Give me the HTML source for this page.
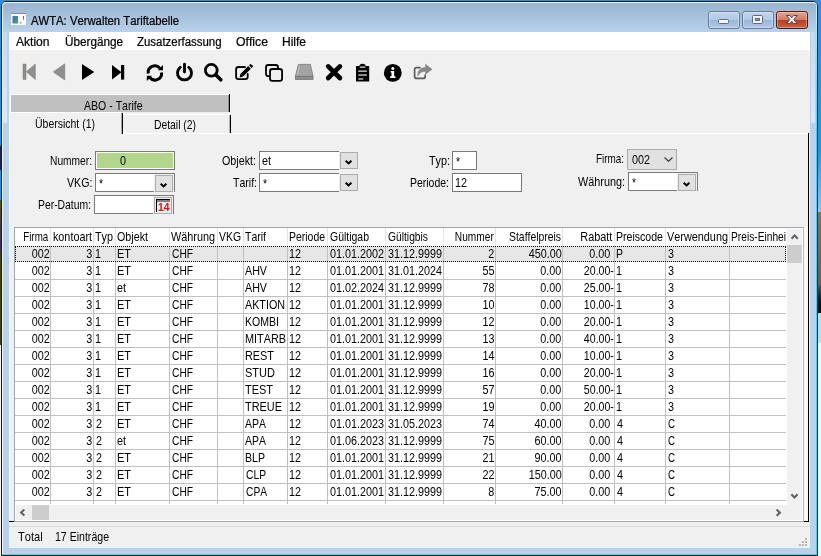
<!DOCTYPE html>
<html><head><meta charset="utf-8"><title>AWTA: Verwalten Tariftabelle</title>
<style>
html,body{margin:0;padding:0}
body{width:821px;height:556px;position:relative;overflow:hidden;background:#2f8ee0;font-family:"Liberation Sans",sans-serif;color:#000;font-kerning:none;font-variant-ligatures:none}
div,span,svg{position:absolute;box-sizing:border-box}
.m{font-size:13px;line-height:13px;white-space:nowrap;transform-origin:0 0;display:block}
.u{-webkit-text-stroke:.22px #000;font-size:12px;line-height:12px;white-space:nowrap;transform-origin:0 0;display:block}
#w{left:0;top:0;width:821px;height:556px;will-change:transform}
</style></head><body><div id="w">
<div style="left:818px;top:150px;width:3px;height:62px;background:linear-gradient(#2f8ee0,#a9b9e2);"></div>
<div style="left:818px;top:212px;width:3px;height:74px;background:linear-gradient(#8f6e56,#76594a);"></div>
<div style="left:818px;top:286px;width:3px;height:27px;background:linear-gradient(#5a4a42,#0c0c0c 60%);"></div>
<div style="left:818px;top:313px;width:3px;height:30px;background:#d2d4d8;"></div>
<div style="left:818px;top:343px;width:3px;height:213px;background:#fcfcfc;"></div>
<div style="left:0px;top:146px;width:1px;height:24px;background:#1c2450;"></div>
<div style="left:0px;top:200px;width:1px;height:145px;background:linear-gradient(#4f5a18,#3a3060 30%,#44480f 45%,#3e4210);"></div>
<div style="left:0px;top:345px;width:1px;height:211px;background:#f4f4f4;"></div>
<div style="left:1px;top:1px;width:817px;height:555px;background:#b9d1ea;border:1px solid #1b1b1b;border-radius:5px 5px 0 0;"></div>
<div style="left:2px;top:2px;width:815px;height:30px;background:linear-gradient(#99b4d1,#b9d1ea);border-top:1px solid #f2f6fb;border-left:1px solid #e6eef8;border-radius:4px 4px 0 0;"></div>
<div style="left:2px;top:8px;width:1px;height:546px;background:#eef3fa;"></div>
<div style="left:816px;top:5px;width:1px;height:550px;background:linear-gradient(#c4effb 0,#7fe2f8 60px,#38d6f6 130px);"></div>
<div style="left:2px;top:554px;width:815px;height:1px;background:#38d6f6;"></div>
<div style="left:811px;top:32px;width:4px;height:91px;background:linear-gradient(#c6d9ef,#dde8f5);"></div>
<div style="left:3px;top:32px;width:4px;height:91px;background:linear-gradient(#c6d9ef,#dde8f5);"></div>
<svg style="left:11px;top:13px" width="15" height="13" viewBox="0 0 15 13"><defs><linearGradient id="gi" x1="0" y1="0" x2="1" y2="1"><stop offset="0" stop-color="#3f6fb5"/><stop offset="1" stop-color="#3fa870"/></linearGradient></defs><rect x="0" y="0" width="15" height="13" fill="#fafafa"/><rect x="0" y="0" width="15" height="1" fill="#8a8a8a"/><rect x="0" y="12" width="15" height="1" fill="#c8c8c8"/><rect x="1.5" y="3" width="5.5" height="7.5" fill="url(#gi)"/><rect x="8.5" y="9" width="2.5" height="1.5" fill="#b8b8b8"/><rect x="12" y="3" width="1" height="2" fill="#3a62b0"/><rect x="12" y="5" width="1" height="2" fill="#4cae50"/></svg>
<span class="u" style="left:30.5px;top:15.1px;transform:scaleX(.941)">AWTA: Verwalten Tariftabelle</span>
<div style="left:708px;top:11px;width:32px;height:18px;background:linear-gradient(#c2d5ec 0%,#b1c9e5 48%,#9bb7d9 52%,#afc8e5 100%);border:1px solid #65799a;border-radius:3px;box-shadow:inset 0 0 0 1px rgba(255,255,255,.35);"></div>
<div style="left:742px;top:11px;width:32px;height:18px;background:linear-gradient(#c2d5ec 0%,#b1c9e5 48%,#9bb7d9 52%,#afc8e5 100%);border:1px solid #65799a;border-radius:3px;box-shadow:inset 0 0 0 1px rgba(255,255,255,.35);"></div>
<div style="left:776px;top:11px;width:32px;height:18px;background:linear-gradient(#e0a294 0%,#d17c68 48%,#bb3e21 52%,#cb6240 100%);border:1px solid #521a15;border-radius:3px;box-shadow:inset 0 0 0 1px rgba(255,255,255,.35);"></div>
<svg style="left:708px;top:11px" width="100" height="18" viewBox="0 0 100 18"><rect x="10.5" y="8.5" width="10" height="4" rx="1" fill="#f4f4f4" stroke="#5e6c80"/><rect x="44.5" y="4.5" width="10" height="8" rx="1" fill="#f4f4f4" stroke="#5e6c80"/><rect x="47.5" y="7.5" width="4" height="2" fill="#8aa0c0" stroke="#5e6c80"/><path d="M78.50 4.50 L81.90 4.50 L83.80 6.80 L85.70 4.50 L89.10 4.50 L85.70 8.55 L89.10 12.60 L85.70 12.60 L83.80 10.30 L81.90 12.60 L78.50 12.60 L81.90 8.55 Z" fill="#f6f6f6" stroke="#54333a" stroke-width=".9" stroke-linejoin="round"/></svg>
<div style="left:9px;top:32px;width:801px;height:516px;background:#f0f0f0;"></div>
<div style="left:9px;top:32px;width:801px;height:18px;background:#ffffff;"></div>
<span class="u" style="left:16.0px;top:35.8px;transform:scaleX(1.0045)">Aktion</span>
<span class="u" style="left:64.5px;top:35.8px;transform:scaleX(0.9768)">Übergänge</span>
<span class="u" style="left:136.5px;top:35.8px;transform:scaleX(0.9525)">Zusatzerfassung</span>
<span class="u" style="left:235.5px;top:35.8px;transform:scaleX(1.0210)">Office</span>
<span class="u" style="left:282.0px;top:35.8px;transform:scaleX(0.9998)">Hilfe</span>
<div style="left:11px;top:94px;width:219px;height:1px;background:#ffffff;"></div>
<div style="left:10px;top:95px;width:1px;height:17px;background:#ffffff;"></div>
<div style="left:11px;top:95px;width:218px;height:17px;background:#c0c0c0;"></div>
<div style="left:229px;top:94px;width:1px;height:18px;background:#000;"></div>
<div style="left:228px;top:95px;width:1px;height:17px;background:rgba(0,0,0,.25);"></div>
<span class="m" style="top:99.00px;transform:scaleX(0.8112);left:84.2px;">ABO - Tarife</span>
<div style="left:9px;top:113px;width:1px;height:408px;background:#ffffff;"></div>
<div style="left:10px;top:112px;width:111px;height:1px;background:#ffffff;"></div>
<div style="left:122px;top:113px;width:1px;height:21px;background:#000;"></div>
<div style="left:121px;top:113px;width:1px;height:21px;background:rgba(0,0,0,.3);"></div>
<div style="left:123px;top:114px;width:107px;height:1px;background:#ffffff;"></div>
<div style="left:230px;top:115px;width:1px;height:18px;background:#000;"></div>
<div style="left:229px;top:115px;width:1px;height:18px;background:rgba(0,0,0,.25);"></div>
<div style="left:123px;top:133px;width:685px;height:1px;background:#ffffff;"></div>
<div style="left:808px;top:133px;width:1px;height:389px;background:#000;"></div>
<div style="left:9px;top:521px;width:5px;height:1px;background:#000;"></div>
<div style="left:804px;top:227px;width:4px;height:294px;background:#f8f8f8;"></div>
<div style="left:804px;top:521px;width:5px;height:1px;background:#000;"></div>
<span class="m" style="top:117.00px;transform:scaleX(0.8064);left:35.4px;">Übersicht (1)</span>
<span class="m" style="top:118.00px;transform:scaleX(0.7964);left:154.4px;">Detail (2)</span>
<span class="m" style="top:154.00px;transform:scaleX(0.7858);left:50.4px;">Nummer:</span>
<div style="left:95px;top:151px;width:80px;height:19px;background:#b2d68c;border:1px solid #7a7a7a;box-shadow:inset 0 0 0 1px #fff;"></div>
<span class="m" style="top:154.00px;transform:scaleX(0.8299);left:120.0px;">0</span>
<span class="m" style="top:176.00px;transform:scaleX(0.8176);left:67.0px;">VKG:</span>
<div style="left:95px;top:173px;width:80px;height:19px;background:#f0f0f0;border:1px solid #7a7a7a;border-bottom:none;"></div>
<div style="left:96px;top:174px;width:58px;height:17px;background:#fff;"></div>
<div style="left:95px;top:191px;width:59px;height:1px;background:#7a7a7a;"></div>
<div style="left:155px;top:175px;width:18px;height:17px;background:#e1e1e1;border:1px solid #adadad;"></div>
<svg style="left:160px;top:183px" width="8" height="6" viewBox="0 0 8 6"><path d="M0.7 0.7 L3.55 3.4 L6.4 0.7" fill="none" stroke="#000" stroke-width="2"/></svg>
<span class="m" style="top:176.70px;transform:scaleX(0.7907);left:98.5px;">*</span>
<span class="m" style="top:198.00px;transform:scaleX(0.7975);left:38.4px;">Per-Datum:</span>
<div style="left:94px;top:195px;width:80px;height:19px;background:#f0f0f0;border:1px solid #7a7a7a;border-bottom:none;"></div>
<div style="left:95px;top:196px;width:58px;height:17px;background:#fff;"></div>
<div style="left:94px;top:213px;width:59px;height:1px;background:#7a7a7a;"></div>
<div style="left:154px;top:197px;width:18px;height:17px;background:#e6eeee;border:1px solid #adadad;"></div>
<div style="left:156px;top:199px;width:1px;height:13px;background:#000;"></div>
<div style="left:156px;top:199px;width:14px;height:1px;background:#000;"></div>
<div style="left:157px;top:200px;width:13px;height:2px;background:#808080;"></div>
<span style="left:158.3px;top:202.2px;font:bold 10.5px/10.5px 'Liberation Sans',sans-serif;color:#f00;transform:scaleX(.98);transform-origin:0 0">14</span>
<span class="m" style="top:154.00px;transform:scaleX(0.8256);left:222.4px;">Objekt:</span>
<div style="left:259px;top:151px;width:80px;height:19px;background:#fff;border-top:1px solid #7a7a7a;border-bottom:1px solid #7a7a7a;border-left:1px solid #7a7a7a;"></div>
<span class="m" style="top:154.00px;transform:scaleX(0.8301);left:262.4px;">et</span>
<div style="left:340px;top:152px;width:18px;height:17px;background:#e1e1e1;border:1px solid #adadad;"></div>
<svg style="left:345px;top:160px" width="8" height="6" viewBox="0 0 8 6"><path d="M0.7 0.7 L3.55 3.4 L6.4 0.7" fill="none" stroke="#000" stroke-width="2"/></svg>
<span class="m" style="top:176.00px;transform:scaleX(0.8105);left:232.9px;">Tarif:</span>
<div style="left:259px;top:173px;width:80px;height:19px;background:#fff;border-top:1px solid #7a7a7a;border-bottom:1px solid #7a7a7a;border-left:1px solid #7a7a7a;"></div>
<span class="m" style="top:176.70px;transform:scaleX(0.7907);left:262.5px;">*</span>
<div style="left:340px;top:174px;width:18px;height:17px;background:#e1e1e1;border:1px solid #adadad;"></div>
<svg style="left:345px;top:182px" width="8" height="6" viewBox="0 0 8 6"><path d="M0.7 0.7 L3.55 3.4 L6.4 0.7" fill="none" stroke="#000" stroke-width="2"/></svg>
<span class="m" style="top:154.00px;transform:scaleX(0.8306);left:428.9px;">Typ:</span>
<div style="left:452px;top:151px;width:25px;height:19px;background:#fff;border:1px solid #7a7a7a;"></div>
<span class="m" style="top:154.70px;transform:scaleX(0.7907);left:455.5px;">*</span>
<span class="m" style="top:176.00px;transform:scaleX(0.8055);left:410.4px;">Periode:</span>
<div style="left:452px;top:173px;width:70px;height:19px;background:#fff;border:1px solid #7a7a7a;"></div>
<span class="m" style="top:176.00px;transform:scaleX(0.8299);left:454.8px;">12</span>
<span class="m" style="top:152.00px;transform:scaleX(0.7603);left:596.4px;">Firma:</span>
<div style="left:627px;top:149px;width:50px;height:21px;background:#e1e1e1;border:1px solid #adadad;"></div>
<span class="m" style="top:153.00px;transform:scaleX(0.8299);left:632.0px;">002</span>
<svg style="left:664px;top:157px" width="9" height="5" viewBox="0 0 9 5"><path d="M0.5 0.5 L4.5 4.3 L8.5 0.5" fill="none" stroke="#404040" stroke-width="1.25"/></svg>
<span class="m" style="top:175.00px;transform:scaleX(0.8339);left:577.9px;">Währung:</span>
<div style="left:628px;top:172px;width:70px;height:19px;background:#f0f0f0;border:1px solid #7a7a7a;border-bottom:none;"></div>
<div style="left:629px;top:173px;width:48px;height:17px;background:#fff;"></div>
<div style="left:628px;top:190px;width:49px;height:1px;background:#7a7a7a;"></div>
<div style="left:678px;top:174px;width:18px;height:17px;background:#e1e1e1;border:1px solid #adadad;"></div>
<svg style="left:683px;top:182px" width="8" height="6" viewBox="0 0 8 6"><path d="M0.7 0.7 L3.55 3.4 L6.4 0.7" fill="none" stroke="#000" stroke-width="2"/></svg>
<span class="m" style="top:175.70px;transform:scaleX(0.7907);left:631.5px;">*</span>
<div style="left:14px;top:227px;width:790px;height:295px;background:#fff;border:1px solid #a2a5ae;border-right-color:#b4b8c4;border-bottom-color:#a6a6a8;"></div>
<div style="left:15px;top:246px;width:771px;height:16px;background:#e7e7e7;"></div>
<div style="left:50px;top:228px;width:1px;height:18px;background:#e4e4e4;"></div>
<div style="left:93px;top:228px;width:1px;height:18px;background:#e4e4e4;"></div>
<div style="left:115px;top:228px;width:1px;height:18px;background:#e4e4e4;"></div>
<div style="left:169px;top:228px;width:1px;height:18px;background:#e4e4e4;"></div>
<div style="left:217px;top:228px;width:1px;height:18px;background:#e4e4e4;"></div>
<div style="left:243px;top:228px;width:1px;height:18px;background:#e4e4e4;"></div>
<div style="left:287px;top:228px;width:1px;height:18px;background:#e4e4e4;"></div>
<div style="left:327px;top:228px;width:1px;height:18px;background:#e4e4e4;"></div>
<div style="left:385px;top:228px;width:1px;height:18px;background:#e4e4e4;"></div>
<div style="left:443px;top:228px;width:1px;height:18px;background:#e4e4e4;"></div>
<div style="left:495px;top:228px;width:1px;height:18px;background:#e4e4e4;"></div>
<div style="left:562px;top:228px;width:1px;height:18px;background:#e4e4e4;"></div>
<div style="left:614px;top:228px;width:1px;height:18px;background:#e4e4e4;"></div>
<div style="left:665px;top:228px;width:1px;height:18px;background:#e4e4e4;"></div>
<div style="left:729px;top:228px;width:1px;height:18px;background:#e4e4e4;"></div>
<div style="left:50px;top:246px;width:1px;height:258px;background:#c0c0c0;"></div>
<div style="left:93px;top:246px;width:1px;height:258px;background:#c0c0c0;"></div>
<div style="left:115px;top:246px;width:1px;height:258px;background:#c0c0c0;"></div>
<div style="left:169px;top:246px;width:1px;height:258px;background:#c0c0c0;"></div>
<div style="left:217px;top:246px;width:1px;height:258px;background:#c0c0c0;"></div>
<div style="left:243px;top:246px;width:1px;height:258px;background:#c0c0c0;"></div>
<div style="left:287px;top:246px;width:1px;height:258px;background:#c0c0c0;"></div>
<div style="left:327px;top:246px;width:1px;height:258px;background:#c0c0c0;"></div>
<div style="left:385px;top:246px;width:1px;height:258px;background:#c0c0c0;"></div>
<div style="left:443px;top:246px;width:1px;height:258px;background:#c0c0c0;"></div>
<div style="left:495px;top:246px;width:1px;height:258px;background:#c0c0c0;"></div>
<div style="left:562px;top:246px;width:1px;height:258px;background:#c0c0c0;"></div>
<div style="left:614px;top:246px;width:1px;height:258px;background:#c0c0c0;"></div>
<div style="left:665px;top:246px;width:1px;height:258px;background:#c0c0c0;"></div>
<div style="left:729px;top:246px;width:1px;height:258px;background:#c0c0c0;"></div>
<div style="left:15px;top:279px;width:771px;height:1px;background:#c0c0c0;"></div>
<div style="left:15px;top:296px;width:771px;height:1px;background:#c0c0c0;"></div>
<div style="left:15px;top:313px;width:771px;height:1px;background:#c0c0c0;"></div>
<div style="left:15px;top:330px;width:771px;height:1px;background:#c0c0c0;"></div>
<div style="left:15px;top:347px;width:771px;height:1px;background:#c0c0c0;"></div>
<div style="left:15px;top:364px;width:771px;height:1px;background:#c0c0c0;"></div>
<div style="left:15px;top:381px;width:771px;height:1px;background:#c0c0c0;"></div>
<div style="left:15px;top:398px;width:771px;height:1px;background:#c0c0c0;"></div>
<div style="left:15px;top:415px;width:771px;height:1px;background:#c0c0c0;"></div>
<div style="left:15px;top:432px;width:771px;height:1px;background:#c0c0c0;"></div>
<div style="left:15px;top:449px;width:771px;height:1px;background:#c0c0c0;"></div>
<div style="left:15px;top:466px;width:771px;height:1px;background:#c0c0c0;"></div>
<div style="left:15px;top:483px;width:771px;height:1px;background:#c0c0c0;"></div>
<div style="left:15px;top:500px;width:771px;height:1px;background:#c0c0c0;"></div>
<div style="left:15px;top:246px;width:771px;height:16px;border:1px dotted #000;"></div>
<span class="m" style="top:230.00px;transform:scaleX(0.7526);right:772.4px;transform-origin:100% 0;">Firma</span>
<span class="m" style="top:230.00px;transform:scaleX(0.8303);right:729.4px;transform-origin:100% 0;">kontoart</span>
<span class="m" style="top:230.00px;transform:scaleX(0.8306);left:95.4px;">Typ</span>
<span class="m" style="top:230.00px;transform:scaleX(0.8251);left:117.4px;">Objekt</span>
<span class="m" style="top:230.00px;transform:scaleX(0.8341);left:171.4px;">Währung</span>
<span class="m" style="top:230.00px;transform:scaleX(0.8014);left:219.4px;">VKG</span>
<span class="m" style="top:230.00px;transform:scaleX(0.8077);left:245.4px;">Tarif</span>
<span class="m" style="top:230.00px;transform:scaleX(0.8034);left:289.4px;">Periode</span>
<span class="m" style="top:230.00px;transform:scaleX(0.8055);left:330.3px;">Gültigab</span>
<span class="m" style="top:230.00px;transform:scaleX(0.7909);left:388.3px;">Gültigbis</span>
<span class="m" style="top:230.00px;transform:scaleX(0.7826);right:327.4px;transform-origin:100% 0;">Nummer</span>
<span class="m" style="top:230.00px;transform:scaleX(0.7996);right:260.4px;transform-origin:100% 0;">Staffelpreis</span>
<span class="m" style="top:230.00px;transform:scaleX(0.8355);right:208.4px;transform-origin:100% 0;">Rabatt</span>
<span class="m" style="top:230.00px;transform:scaleX(0.8130);left:616.4px;">Preiscode</span>
<span class="m" style="top:230.00px;transform:scaleX(0.8356);left:667.4px;">Verwendung</span>
<span class="m" style="top:230.00px;transform:scaleX(0.7848);left:731.4px;">Preis-Einhei</span>
<span class="m" style="top:247.00px;transform:scaleX(0.8299);right:771.4px;transform-origin:100% 0;">002</span>
<span class="m" style="top:247.00px;transform:scaleX(0.8299);right:728.4px;transform-origin:100% 0;">3</span>
<span class="m" style="top:247.00px;transform:scaleX(0.8299);left:94.8px;">1</span>
<span class="m" style="top:247.00px;transform:scaleX(0.8428);left:117.4px;">ET</span>
<span class="m" style="top:247.00px;transform:scaleX(0.7860);left:172.3px;">CHF</span>
<span class="m" style="top:247.00px;transform:scaleX(0.8299);left:288.8px;">12</span>
<span class="m" style="top:247.00px;transform:scaleX(0.8300);left:330.0px;">01.01.2002</span>
<span class="m" style="top:247.00px;transform:scaleX(0.8300);left:388.0px;">31.12.9999</span>
<span class="m" style="top:247.00px;transform:scaleX(0.8299);right:326.4px;transform-origin:100% 0;">2</span>
<span class="m" style="top:247.00px;transform:scaleX(0.8299);right:259.4px;transform-origin:100% 0;">450.00</span>
<span class="m" style="top:247.00px;transform:scaleX(0.8300);right:210.4px;transform-origin:100% 0;">0.00</span>
<span class="m" style="top:247.00px;transform:scaleX(0.8073);left:616.4px;">P</span>
<span class="m" style="top:247.00px;transform:scaleX(0.8299);left:668.0px;">3</span>
<span class="m" style="top:264.00px;transform:scaleX(0.8299);right:771.4px;transform-origin:100% 0;">002</span>
<span class="m" style="top:264.00px;transform:scaleX(0.8299);right:728.4px;transform-origin:100% 0;">3</span>
<span class="m" style="top:264.00px;transform:scaleX(0.8299);left:94.8px;">1</span>
<span class="m" style="top:264.00px;transform:scaleX(0.8428);left:117.4px;">ET</span>
<span class="m" style="top:264.00px;transform:scaleX(0.7860);left:172.3px;">CHF</span>
<span class="m" style="top:264.00px;transform:scaleX(0.8230);left:245.4px;">AHV</span>
<span class="m" style="top:264.00px;transform:scaleX(0.8299);left:288.8px;">12</span>
<span class="m" style="top:264.00px;transform:scaleX(0.8300);left:330.0px;">01.01.2001</span>
<span class="m" style="top:264.00px;transform:scaleX(0.8300);left:388.0px;">31.01.2024</span>
<span class="m" style="top:264.00px;transform:scaleX(0.8299);right:326.4px;transform-origin:100% 0;">55</span>
<span class="m" style="top:264.00px;transform:scaleX(0.8300);right:259.4px;transform-origin:100% 0;">0.00</span>
<span class="m" style="top:264.00px;transform:scaleX(0.8139);right:207.4px;transform-origin:100% 0;">20.00-</span>
<span class="m" style="top:264.00px;transform:scaleX(0.8299);left:615.8px;">1</span>
<span class="m" style="top:264.00px;transform:scaleX(0.8299);left:668.0px;">3</span>
<span class="m" style="top:281.00px;transform:scaleX(0.8299);right:771.4px;transform-origin:100% 0;">002</span>
<span class="m" style="top:281.00px;transform:scaleX(0.8299);right:728.4px;transform-origin:100% 0;">3</span>
<span class="m" style="top:281.00px;transform:scaleX(0.8299);left:94.8px;">1</span>
<span class="m" style="top:281.00px;transform:scaleX(0.8301);left:117.4px;">et</span>
<span class="m" style="top:281.00px;transform:scaleX(0.7860);left:172.3px;">CHF</span>
<span class="m" style="top:281.00px;transform:scaleX(0.8230);left:245.4px;">AHV</span>
<span class="m" style="top:281.00px;transform:scaleX(0.8299);left:288.8px;">12</span>
<span class="m" style="top:281.00px;transform:scaleX(0.8300);left:330.0px;">01.02.2024</span>
<span class="m" style="top:281.00px;transform:scaleX(0.8300);left:388.0px;">31.12.9999</span>
<span class="m" style="top:281.00px;transform:scaleX(0.8299);right:326.4px;transform-origin:100% 0;">78</span>
<span class="m" style="top:281.00px;transform:scaleX(0.8300);right:259.4px;transform-origin:100% 0;">0.00</span>
<span class="m" style="top:281.00px;transform:scaleX(0.8139);right:207.4px;transform-origin:100% 0;">25.00-</span>
<span class="m" style="top:281.00px;transform:scaleX(0.8299);left:615.8px;">1</span>
<span class="m" style="top:281.00px;transform:scaleX(0.8299);left:668.0px;">3</span>
<span class="m" style="top:298.00px;transform:scaleX(0.8299);right:771.4px;transform-origin:100% 0;">002</span>
<span class="m" style="top:298.00px;transform:scaleX(0.8299);right:728.4px;transform-origin:100% 0;">3</span>
<span class="m" style="top:298.00px;transform:scaleX(0.8299);left:94.8px;">1</span>
<span class="m" style="top:298.00px;transform:scaleX(0.8428);left:117.4px;">ET</span>
<span class="m" style="top:298.00px;transform:scaleX(0.7860);left:172.3px;">CHF</span>
<span class="m" style="top:298.00px;transform:scaleX(0.8265);left:245.4px;">AKTION</span>
<span class="m" style="top:298.00px;transform:scaleX(0.8299);left:288.8px;">12</span>
<span class="m" style="top:298.00px;transform:scaleX(0.8300);left:330.0px;">01.01.2001</span>
<span class="m" style="top:298.00px;transform:scaleX(0.8300);left:388.0px;">31.12.9999</span>
<span class="m" style="top:298.00px;transform:scaleX(0.8299);right:326.4px;transform-origin:100% 0;">10</span>
<span class="m" style="top:298.00px;transform:scaleX(0.8300);right:259.4px;transform-origin:100% 0;">0.00</span>
<span class="m" style="top:298.00px;transform:scaleX(0.8139);right:207.4px;transform-origin:100% 0;">10.00-</span>
<span class="m" style="top:298.00px;transform:scaleX(0.8299);left:615.8px;">1</span>
<span class="m" style="top:298.00px;transform:scaleX(0.8299);left:668.0px;">3</span>
<span class="m" style="top:315.00px;transform:scaleX(0.8299);right:771.4px;transform-origin:100% 0;">002</span>
<span class="m" style="top:315.00px;transform:scaleX(0.8299);right:728.4px;transform-origin:100% 0;">3</span>
<span class="m" style="top:315.00px;transform:scaleX(0.8299);left:94.8px;">1</span>
<span class="m" style="top:315.00px;transform:scaleX(0.8428);left:117.4px;">ET</span>
<span class="m" style="top:315.00px;transform:scaleX(0.7860);left:172.3px;">CHF</span>
<span class="m" style="top:315.00px;transform:scaleX(0.8116);left:245.4px;">KOMBI</span>
<span class="m" style="top:315.00px;transform:scaleX(0.8299);left:288.8px;">12</span>
<span class="m" style="top:315.00px;transform:scaleX(0.8300);left:330.0px;">01.01.2001</span>
<span class="m" style="top:315.00px;transform:scaleX(0.8300);left:388.0px;">31.12.9999</span>
<span class="m" style="top:315.00px;transform:scaleX(0.8299);right:326.4px;transform-origin:100% 0;">12</span>
<span class="m" style="top:315.00px;transform:scaleX(0.8300);right:259.4px;transform-origin:100% 0;">0.00</span>
<span class="m" style="top:315.00px;transform:scaleX(0.8139);right:207.4px;transform-origin:100% 0;">20.00-</span>
<span class="m" style="top:315.00px;transform:scaleX(0.8299);left:615.8px;">1</span>
<span class="m" style="top:315.00px;transform:scaleX(0.8299);left:668.0px;">3</span>
<span class="m" style="top:332.00px;transform:scaleX(0.8299);right:771.4px;transform-origin:100% 0;">002</span>
<span class="m" style="top:332.00px;transform:scaleX(0.8299);right:728.4px;transform-origin:100% 0;">3</span>
<span class="m" style="top:332.00px;transform:scaleX(0.8299);left:94.8px;">1</span>
<span class="m" style="top:332.00px;transform:scaleX(0.8428);left:117.4px;">ET</span>
<span class="m" style="top:332.00px;transform:scaleX(0.7860);left:172.3px;">CHF</span>
<span class="m" style="top:332.00px;transform:scaleX(0.8348);left:245.4px;">MITARB</span>
<span class="m" style="top:332.00px;transform:scaleX(0.8299);left:288.8px;">12</span>
<span class="m" style="top:332.00px;transform:scaleX(0.8300);left:330.0px;">01.01.2001</span>
<span class="m" style="top:332.00px;transform:scaleX(0.8300);left:388.0px;">31.12.9999</span>
<span class="m" style="top:332.00px;transform:scaleX(0.8299);right:326.4px;transform-origin:100% 0;">13</span>
<span class="m" style="top:332.00px;transform:scaleX(0.8300);right:259.4px;transform-origin:100% 0;">0.00</span>
<span class="m" style="top:332.00px;transform:scaleX(0.8139);right:207.4px;transform-origin:100% 0;">40.00-</span>
<span class="m" style="top:332.00px;transform:scaleX(0.8299);left:615.8px;">1</span>
<span class="m" style="top:332.00px;transform:scaleX(0.8299);left:668.0px;">3</span>
<span class="m" style="top:349.00px;transform:scaleX(0.8299);right:771.4px;transform-origin:100% 0;">002</span>
<span class="m" style="top:349.00px;transform:scaleX(0.8299);right:728.4px;transform-origin:100% 0;">3</span>
<span class="m" style="top:349.00px;transform:scaleX(0.8299);left:94.8px;">1</span>
<span class="m" style="top:349.00px;transform:scaleX(0.8428);left:117.4px;">ET</span>
<span class="m" style="top:349.00px;transform:scaleX(0.7860);left:172.3px;">CHF</span>
<span class="m" style="top:349.00px;transform:scaleX(0.8364);left:245.4px;">REST</span>
<span class="m" style="top:349.00px;transform:scaleX(0.8299);left:288.8px;">12</span>
<span class="m" style="top:349.00px;transform:scaleX(0.8300);left:330.0px;">01.01.2001</span>
<span class="m" style="top:349.00px;transform:scaleX(0.8300);left:388.0px;">31.12.9999</span>
<span class="m" style="top:349.00px;transform:scaleX(0.8299);right:326.4px;transform-origin:100% 0;">14</span>
<span class="m" style="top:349.00px;transform:scaleX(0.8300);right:259.4px;transform-origin:100% 0;">0.00</span>
<span class="m" style="top:349.00px;transform:scaleX(0.8139);right:207.4px;transform-origin:100% 0;">10.00-</span>
<span class="m" style="top:349.00px;transform:scaleX(0.8299);left:615.8px;">1</span>
<span class="m" style="top:349.00px;transform:scaleX(0.8299);left:668.0px;">3</span>
<span class="m" style="top:366.00px;transform:scaleX(0.8299);right:771.4px;transform-origin:100% 0;">002</span>
<span class="m" style="top:366.00px;transform:scaleX(0.8299);right:728.4px;transform-origin:100% 0;">3</span>
<span class="m" style="top:366.00px;transform:scaleX(0.8299);left:94.8px;">1</span>
<span class="m" style="top:366.00px;transform:scaleX(0.8428);left:117.4px;">ET</span>
<span class="m" style="top:366.00px;transform:scaleX(0.7860);left:172.3px;">CHF</span>
<span class="m" style="top:366.00px;transform:scaleX(0.8477);left:245.4px;">STUD</span>
<span class="m" style="top:366.00px;transform:scaleX(0.8299);left:288.8px;">12</span>
<span class="m" style="top:366.00px;transform:scaleX(0.8300);left:330.0px;">01.01.2001</span>
<span class="m" style="top:366.00px;transform:scaleX(0.8300);left:388.0px;">31.12.9999</span>
<span class="m" style="top:366.00px;transform:scaleX(0.8299);right:326.4px;transform-origin:100% 0;">16</span>
<span class="m" style="top:366.00px;transform:scaleX(0.8300);right:259.4px;transform-origin:100% 0;">0.00</span>
<span class="m" style="top:366.00px;transform:scaleX(0.8139);right:207.4px;transform-origin:100% 0;">20.00-</span>
<span class="m" style="top:366.00px;transform:scaleX(0.8299);left:615.8px;">1</span>
<span class="m" style="top:366.00px;transform:scaleX(0.8299);left:668.0px;">3</span>
<span class="m" style="top:383.00px;transform:scaleX(0.8299);right:771.4px;transform-origin:100% 0;">002</span>
<span class="m" style="top:383.00px;transform:scaleX(0.8299);right:728.4px;transform-origin:100% 0;">3</span>
<span class="m" style="top:383.00px;transform:scaleX(0.8299);left:94.8px;">1</span>
<span class="m" style="top:383.00px;transform:scaleX(0.8428);left:117.4px;">ET</span>
<span class="m" style="top:383.00px;transform:scaleX(0.7860);left:172.3px;">CHF</span>
<span class="m" style="top:383.00px;transform:scaleX(0.8428);left:245.4px;">TEST</span>
<span class="m" style="top:383.00px;transform:scaleX(0.8299);left:288.8px;">12</span>
<span class="m" style="top:383.00px;transform:scaleX(0.8300);left:330.0px;">01.01.2001</span>
<span class="m" style="top:383.00px;transform:scaleX(0.8300);left:388.0px;">31.12.9999</span>
<span class="m" style="top:383.00px;transform:scaleX(0.8299);right:326.4px;transform-origin:100% 0;">57</span>
<span class="m" style="top:383.00px;transform:scaleX(0.8300);right:259.4px;transform-origin:100% 0;">0.00</span>
<span class="m" style="top:383.00px;transform:scaleX(0.8139);right:207.4px;transform-origin:100% 0;">50.00-</span>
<span class="m" style="top:383.00px;transform:scaleX(0.8299);left:615.8px;">1</span>
<span class="m" style="top:383.00px;transform:scaleX(0.8299);left:668.0px;">3</span>
<span class="m" style="top:400.00px;transform:scaleX(0.8299);right:771.4px;transform-origin:100% 0;">002</span>
<span class="m" style="top:400.00px;transform:scaleX(0.8299);right:728.4px;transform-origin:100% 0;">3</span>
<span class="m" style="top:400.00px;transform:scaleX(0.8299);left:94.8px;">1</span>
<span class="m" style="top:400.00px;transform:scaleX(0.8428);left:117.4px;">ET</span>
<span class="m" style="top:400.00px;transform:scaleX(0.7860);left:172.3px;">CHF</span>
<span class="m" style="top:400.00px;transform:scaleX(0.8398);left:245.4px;">TREUE</span>
<span class="m" style="top:400.00px;transform:scaleX(0.8299);left:288.8px;">12</span>
<span class="m" style="top:400.00px;transform:scaleX(0.8300);left:330.0px;">01.01.2001</span>
<span class="m" style="top:400.00px;transform:scaleX(0.8300);left:388.0px;">31.12.9999</span>
<span class="m" style="top:400.00px;transform:scaleX(0.8299);right:326.4px;transform-origin:100% 0;">19</span>
<span class="m" style="top:400.00px;transform:scaleX(0.8300);right:259.4px;transform-origin:100% 0;">0.00</span>
<span class="m" style="top:400.00px;transform:scaleX(0.8139);right:207.4px;transform-origin:100% 0;">20.00-</span>
<span class="m" style="top:400.00px;transform:scaleX(0.8299);left:615.8px;">1</span>
<span class="m" style="top:400.00px;transform:scaleX(0.8299);left:668.0px;">3</span>
<span class="m" style="top:417.00px;transform:scaleX(0.8299);right:771.4px;transform-origin:100% 0;">002</span>
<span class="m" style="top:417.00px;transform:scaleX(0.8299);right:728.4px;transform-origin:100% 0;">3</span>
<span class="m" style="top:417.00px;transform:scaleX(0.8299);left:96.0px;">2</span>
<span class="m" style="top:417.00px;transform:scaleX(0.8428);left:117.4px;">ET</span>
<span class="m" style="top:417.00px;transform:scaleX(0.7860);left:172.3px;">CHF</span>
<span class="m" style="top:417.00px;transform:scaleX(0.8073);left:245.4px;">APA</span>
<span class="m" style="top:417.00px;transform:scaleX(0.8299);left:288.8px;">12</span>
<span class="m" style="top:417.00px;transform:scaleX(0.8300);left:330.0px;">01.01.2023</span>
<span class="m" style="top:417.00px;transform:scaleX(0.8300);left:388.0px;">31.05.2023</span>
<span class="m" style="top:417.00px;transform:scaleX(0.8299);right:326.4px;transform-origin:100% 0;">74</span>
<span class="m" style="top:417.00px;transform:scaleX(0.8300);right:259.4px;transform-origin:100% 0;">40.00</span>
<span class="m" style="top:417.00px;transform:scaleX(0.8300);right:210.4px;transform-origin:100% 0;">0.00</span>
<span class="m" style="top:417.00px;transform:scaleX(0.8299);left:617.0px;">4</span>
<span class="m" style="top:417.00px;transform:scaleX(0.7456);left:668.3px;">C</span>
<span class="m" style="top:434.00px;transform:scaleX(0.8299);right:771.4px;transform-origin:100% 0;">002</span>
<span class="m" style="top:434.00px;transform:scaleX(0.8299);right:728.4px;transform-origin:100% 0;">3</span>
<span class="m" style="top:434.00px;transform:scaleX(0.8299);left:96.0px;">2</span>
<span class="m" style="top:434.00px;transform:scaleX(0.8301);left:117.4px;">et</span>
<span class="m" style="top:434.00px;transform:scaleX(0.7860);left:172.3px;">CHF</span>
<span class="m" style="top:434.00px;transform:scaleX(0.8073);left:245.4px;">APA</span>
<span class="m" style="top:434.00px;transform:scaleX(0.8299);left:288.8px;">12</span>
<span class="m" style="top:434.00px;transform:scaleX(0.8300);left:330.0px;">01.06.2023</span>
<span class="m" style="top:434.00px;transform:scaleX(0.8300);left:388.0px;">31.12.9999</span>
<span class="m" style="top:434.00px;transform:scaleX(0.8299);right:326.4px;transform-origin:100% 0;">75</span>
<span class="m" style="top:434.00px;transform:scaleX(0.8300);right:259.4px;transform-origin:100% 0;">60.00</span>
<span class="m" style="top:434.00px;transform:scaleX(0.8300);right:210.4px;transform-origin:100% 0;">0.00</span>
<span class="m" style="top:434.00px;transform:scaleX(0.8299);left:617.0px;">4</span>
<span class="m" style="top:434.00px;transform:scaleX(0.7456);left:668.3px;">C</span>
<span class="m" style="top:451.00px;transform:scaleX(0.8299);right:771.4px;transform-origin:100% 0;">002</span>
<span class="m" style="top:451.00px;transform:scaleX(0.8299);right:728.4px;transform-origin:100% 0;">3</span>
<span class="m" style="top:451.00px;transform:scaleX(0.8299);left:96.0px;">2</span>
<span class="m" style="top:451.00px;transform:scaleX(0.8428);left:117.4px;">ET</span>
<span class="m" style="top:451.00px;transform:scaleX(0.7860);left:172.3px;">CHF</span>
<span class="m" style="top:451.00px;transform:scaleX(0.8139);left:245.4px;">BLP</span>
<span class="m" style="top:451.00px;transform:scaleX(0.8299);left:288.8px;">12</span>
<span class="m" style="top:451.00px;transform:scaleX(0.8300);left:330.0px;">01.01.2001</span>
<span class="m" style="top:451.00px;transform:scaleX(0.8300);left:388.0px;">31.12.9999</span>
<span class="m" style="top:451.00px;transform:scaleX(0.8299);right:326.4px;transform-origin:100% 0;">21</span>
<span class="m" style="top:451.00px;transform:scaleX(0.8300);right:259.4px;transform-origin:100% 0;">90.00</span>
<span class="m" style="top:451.00px;transform:scaleX(0.8300);right:210.4px;transform-origin:100% 0;">0.00</span>
<span class="m" style="top:451.00px;transform:scaleX(0.8299);left:617.0px;">4</span>
<span class="m" style="top:451.00px;transform:scaleX(0.7456);left:668.3px;">C</span>
<span class="m" style="top:468.00px;transform:scaleX(0.8299);right:771.4px;transform-origin:100% 0;">002</span>
<span class="m" style="top:468.00px;transform:scaleX(0.8299);right:728.4px;transform-origin:100% 0;">3</span>
<span class="m" style="top:468.00px;transform:scaleX(0.8299);left:96.0px;">2</span>
<span class="m" style="top:468.00px;transform:scaleX(0.8428);left:117.4px;">ET</span>
<span class="m" style="top:468.00px;transform:scaleX(0.7860);left:172.3px;">CHF</span>
<span class="m" style="top:468.00px;transform:scaleX(0.7909);left:246.3px;">CLP</span>
<span class="m" style="top:468.00px;transform:scaleX(0.8299);left:288.8px;">12</span>
<span class="m" style="top:468.00px;transform:scaleX(0.8300);left:330.0px;">01.01.2001</span>
<span class="m" style="top:468.00px;transform:scaleX(0.8300);left:388.0px;">31.12.9999</span>
<span class="m" style="top:468.00px;transform:scaleX(0.8299);right:326.4px;transform-origin:100% 0;">22</span>
<span class="m" style="top:468.00px;transform:scaleX(0.8299);right:259.4px;transform-origin:100% 0;">150.00</span>
<span class="m" style="top:468.00px;transform:scaleX(0.8300);right:210.4px;transform-origin:100% 0;">0.00</span>
<span class="m" style="top:468.00px;transform:scaleX(0.8299);left:617.0px;">4</span>
<span class="m" style="top:468.00px;transform:scaleX(0.7456);left:668.3px;">C</span>
<span class="m" style="top:485.00px;transform:scaleX(0.8299);right:771.4px;transform-origin:100% 0;">002</span>
<span class="m" style="top:485.00px;transform:scaleX(0.8299);right:728.4px;transform-origin:100% 0;">3</span>
<span class="m" style="top:485.00px;transform:scaleX(0.8299);left:96.0px;">2</span>
<span class="m" style="top:485.00px;transform:scaleX(0.8428);left:117.4px;">ET</span>
<span class="m" style="top:485.00px;transform:scaleX(0.7860);left:172.3px;">CHF</span>
<span class="m" style="top:485.00px;transform:scaleX(0.7856);left:246.3px;">CPA</span>
<span class="m" style="top:485.00px;transform:scaleX(0.8299);left:288.8px;">12</span>
<span class="m" style="top:485.00px;transform:scaleX(0.8300);left:330.0px;">01.01.2001</span>
<span class="m" style="top:485.00px;transform:scaleX(0.8300);left:388.0px;">31.12.9999</span>
<span class="m" style="top:485.00px;transform:scaleX(0.8299);right:326.4px;transform-origin:100% 0;">8</span>
<span class="m" style="top:485.00px;transform:scaleX(0.8300);right:259.4px;transform-origin:100% 0;">75.00</span>
<span class="m" style="top:485.00px;transform:scaleX(0.8300);right:210.4px;transform-origin:100% 0;">0.00</span>
<span class="m" style="top:485.00px;transform:scaleX(0.8299);left:617.0px;">4</span>
<span class="m" style="top:485.00px;transform:scaleX(0.7456);left:668.3px;">C</span>
<div style="left:787px;top:229px;width:15px;height:291px;background:#f0f0f0;"></div>
<div style="left:16px;top:505px;width:771px;height:15px;background:#f0f0f0;"></div>
<div style="left:787px;top:245px;width:15px;height:18px;background:#cdcdcd;"></div>
<div style="left:32px;top:505px;width:17px;height:15px;background:#cdcdcd;"></div>
<svg style="left:0;top:0" width="821" height="556" viewBox="0 0 821 556"><path d="M791.55 238.7 L794.65 235.4 L797.75 238.7 M791.35 494.2 L794.45 497.5 L797.55 494.2 M24.4 509.4 L21.1 512.5 L24.4 515.6 M776.6 509.55 L779.9 512.65 L776.6 515.75" fill="none" stroke="#606060" stroke-width="2"/></svg>
<div style="left:9px;top:526px;width:801px;height:1px;background:#d9d9d9;"></div>
<span class="m" style="top:530.00px;transform:scaleX(0.8512);left:18.1px;">Total</span>
<span class="m" style="top:530.00px;transform:scaleX(0.8121);left:55.4px;">17 Einträge</span>
<div style="left:805px;top:538px;width:2px;height:2px;background:#b6b6b6;"></div>
<div style="left:802px;top:541px;width:2px;height:2px;background:#b6b6b6;"></div>
<div style="left:805px;top:541px;width:2px;height:2px;background:#b6b6b6;"></div>
<div style="left:799px;top:544px;width:2px;height:2px;background:#b6b6b6;"></div>
<div style="left:802px;top:544px;width:2px;height:2px;background:#b6b6b6;"></div>
<div style="left:805px;top:544px;width:2px;height:2px;background:#b6b6b6;"></div>
<svg style="left:9px;top:50px" width="801" height="44" viewBox="9 50 801 44"><rect x="23" y="64" width="3" height="15.5" fill="#8f8f8f" stroke="#777" stroke-width=".5"/><path d="M35.3 64 L35.3 79.5 L26.3 71.8 Z" fill="#8f8f8f" stroke="#777" stroke-width=".5"/><path d="M64.8 63.8 L64.8 80 L53.2 71.9 Z" fill="#8f8f8f" stroke="#777" stroke-width=".5"/><path d="M82 64 L82 80 L94.2 72 Z" fill="#000"/><path d="M112 65 L112 79.6 L121.5 72.3 Z" fill="#000"/><rect x="121" y="65" width="3.2" height="14.6" fill="#000"/><g fill="none" stroke="#000" stroke-width="3"><path d="M148.3 73.6 A6.6 6.6 0 0 1 160 68.4"/><path d="M161.5 72.4 A6.6 6.6 0 0 1 149.8 77.5"/></g><path d="M163 65 L163 70.2 L157.8 70.2 Z" fill="#000"/><path d="M146.8 81 L146.8 75.8 L152 75.8 Z" fill="#000"/><path d="M180.2 67.4 A7 7 0 1 0 188.8 67.4" fill="none" stroke="#000" stroke-width="2.9" stroke-linecap="round"/><path d="M184.5 64.2 L184.5 72" stroke="#000" stroke-width="2.9" stroke-linecap="round"/><circle cx="211.3" cy="70.3" r="5.9" fill="none" stroke="#000" stroke-width="2.8"/><path d="M216 75 L220.8 79.8" stroke="#000" stroke-width="3.6" stroke-linecap="round"/><path d="M247.7 74 L247.7 76.7 A2.4 2.4 0 0 1 245.3 79.1 L238.5 79.1 A2.4 2.4 0 0 1 236.1 76.7 L236.1 69.4 A2.4 2.4 0 0 1 238.5 67 L245 67" fill="none" stroke="#000" stroke-width="1.8" stroke-linecap="round"/><path d="M239.6 77.4 L240.4 73.9 L248.2 66.1 L250.9 68.8 L243.1 76.6 Z M249 65.3 L249.9 64.4 A1.1 1.1 0 0 1 251.4 64.4 L252.6 65.6 A1.1 1.1 0 0 1 252.6 67.1 L251.7 68 Z" fill="#000"/><path d="M269 76.2 L268.3 76.2 A2.3 2.3 0 0 1 266 73.9 L266 67.3 A2.3 2.3 0 0 1 268.3 65 L275.7 65 A2.3 2.3 0 0 1 278 67.3 L278 68" fill="none" stroke="#000" stroke-width="1.8"/><rect x="270" y="69" width="12.1" height="11.9" rx="2.4" fill="#f0f0f0" stroke="#000" stroke-width="1.8"/><path d="M298.4 64.4 L310.4 64.4 L313 76.4 L295.4 76.4 Z" fill="#a3a3a3" stroke="#808080" stroke-width=".9"/><path d="M299.6 65.8 L297.2 75.4" stroke="#c2c2c2" stroke-width="1" fill="none"/><rect x="295.4" y="76.4" width="17.6" height="3.1" fill="#8e8e8e" stroke="#767676" stroke-width=".8"/><path d="M328.2 66.4 L339.9 78 M339.9 66.4 L328.2 78" stroke="#000" stroke-width="4.7" stroke-linecap="round"/><path d="M356 66 L359.5 66 L359.5 65 Q362.5 62.6 365.5 65 L365.5 66 L369.2 66 L369.2 81.6 L356 81.6 Z" fill="#000"/><rect x="359.8" y="66.5" width="5.6" height="1.2" fill="#e6e6e6"/><rect x="358.3" y="70.5" width="8.6" height="1.3" fill="#d8d8d8"/><rect x="358.3" y="74.4" width="8.6" height="1.3" fill="#d8d8d8"/><rect x="358.3" y="78.3" width="5" height="1.3" fill="#d8d8d8"/><circle cx="392.8" cy="72.9" r="8.9" fill="#000"/><circle cx="392.8" cy="68.4" r="1.5" fill="#fff"/><path d="M390.6 71 L394.2 71 L394.2 76.2 L395.4 76.2 L395.4 78 L390.2 78 L390.2 76.2 L391.5 76.2 L391.5 72.6 L390.6 72.6 Z" fill="#fff"/><path d="M425.2 74.4 L425.2 76.4 A2 2 0 0 1 423.2 78.4 L416.6 78.4 A2 2 0 0 1 414.6 76.4 L414.6 69.6 A2 2 0 0 1 416.6 67.6 L420.6 67.6" fill="none" stroke="#5c5c5c" stroke-width="1.7"/><path d="M417.8 75.8 C417.6 70.4 420.6 67.6 425.6 67.5 L425.6 64.4 L432 69.3 L425.6 74.2 L425.6 71.2 C422 71.2 419.6 72.4 417.8 75.8 Z" fill="#8a8a8a" stroke="#707070" stroke-width=".5"/></svg>
</div></body></html>
